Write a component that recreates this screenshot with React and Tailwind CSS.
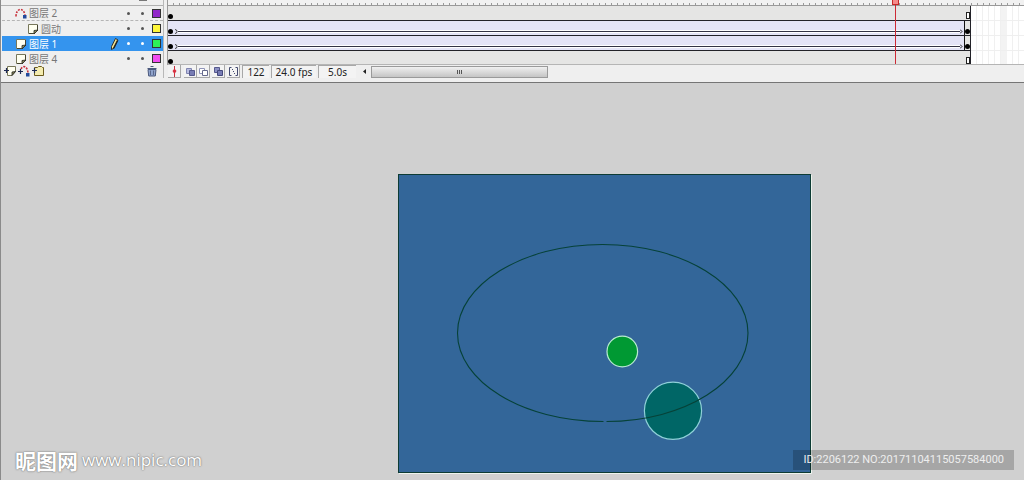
import { useState } from "react";

const LAYERS = [
  { id: "guide", name: "图层 2", color: "#9128c9", type: "guide", indent: false, tween: false },
  { id: "circle", name: "圆动", color: "#fff73a", type: "page", indent: true, tween: true },
  { id: "layer1", name: "图层 1", color: "#2df05a", type: "page", indent: false, tween: true },
  { id: "layer4", name: "图层 4", color: "#f24df0", type: "page", indent: false, tween: false },
];

function PageIcon() {
  return (
    <svg className="size-3 shrink-0" viewBox="0 0 12 12" fill="none">
      <path d="M1.5 1.5h9v5.5l-3.5 3.500h-5.500z" fill="#fffff0" stroke="#77775a" />
      <path d="M11 7L7 11V7.500z" fill="#8a8a55" stroke="#222" strokeWidth="0.8" />
      <path d="M10.500 2v5M2 10.500h5" stroke="#444430" />
    </svg>
  );
}

function GuideIcon() {
  return (
    <svg className="size-3 shrink-0" viewBox="0 0 12 12" fill="none">
      <path d="M1 9.500C1 1 8.500 0 10 8" stroke="#c8323c" strokeWidth="1.600" strokeDasharray="2 1.200" />
      <rect x="8" y="8" width="3.500" height="3.500" fill="#234a9c" />
    </svg>
  );
}

function AddLayerIcon() {
  return (
    <svg className="h-3 w-3" viewBox="0 0 12 12" fill="none">
      <path d="M3.500 1.500h8v5l-3.500 4h-4.500z" fill="#fffff0" stroke="#77775a" />
      <path d="M11.500 6.500L8 10.500V7z" fill="#8a8a55" stroke="#222" strokeWidth="0.8" />
      <path d="M0 5.500h5M2.500 3v5" stroke="#1e2a55" strokeWidth="1.200" />
    </svg>
  );
}

function AddGuideIcon() {
  return (
    <svg className="h-3 w-3" viewBox="0 0 12 12" fill="none">
      <path d="M3 4C5 0 9.500 1 10 8" stroke="#c8323c" strokeWidth="1.600" strokeDasharray="2 1.200" />
      <path d="M0 6.500h5M2.500 4v5" stroke="#1e2a55" strokeWidth="1.200" />
      <rect x="8" y="8" width="3.500" height="3.500" fill="#234a9c" />
    </svg>
  );
}

function AddFolderIcon() {
  return (
    <svg className="h-3 w-3" viewBox="0 0 12 12" fill="none">
      <path d="M2.500 10.500v-8h3l1-1h3l1 1h1v8z" fill="#f4ecb0" stroke="#6b5a1c" />
      <path d="M0 5.500h5M2.500 3v5" stroke="#1e2a55" strokeWidth="1.200" />
    </svg>
  );
}

function TrashIcon() {
  return (
    <svg className="h-3 w-3" viewBox="0 0 12 12" fill="none">
      <path d="M2 4.500h8l-.7 6.500H2.700z" fill="#8fa3cc" stroke="#4a587c" />
      <path d="M1.500 3.500h9M4.500 1.500h3" stroke="#4a587c" strokeWidth="1.200" />
      <path d="M4.500 5.500v4.500M7.500 5.500v4.500" stroke="#5a688c" />
    </svg>
  );
}

function PencilIcon() {
  return (
    <svg className="size-3 shrink-0" viewBox="0 0 12 12" fill="none">
      <path d="M7.500 .5L10 2 6 10 3.500 11.500 3.500 8.500z" fill="#f0e090" stroke="#222" strokeWidth="0.900" />
      <path d="M9.500 2.500L5.500 10.500" stroke="#222" strokeWidth="1.400" />
    </svg>
  );
}

function LayerRow({ layer, selected, onSelect }) {
  return (
    <button
      onClick={onSelect}
      className={`flex h-[15px] w-full items-center pr-0.5 text-left ${layer.indent ? "pl-[25px]" : "pl-[13px]"} ${
        selected ? "bg-[#3494ee] text-white" : "text-[#777777]"
      } ${layer.type === "guide" ? "border-b border-dashed border-[#b5b5b5]" : ""}`}
    >
      {layer.type === "guide" ? <GuideIcon /> : <PageIcon />}
      <span className="ml-0.5 flex-1 text-[10px] leading-[14px]">{layer.name}</span>
      {selected && <PencilIcon />}
      <span className={`ml-[7px] size-[3px] rounded-full ${selected ? "bg-white" : "bg-[#555555]"}`} />
      <span className={`ml-[11px] size-[3px] rounded-full ${selected ? "bg-white" : "bg-[#555555]"}`} />
      <span
        className="ml-2 size-[9px] border border-[#333333]"
        style={{ backgroundColor: layer.color }}
      />
    </button>
  );
}

function FrameRow({ tween, lined }) {
  return (
    <div className="flex h-[15px]">
      <div
        className={`flex flex-1 items-end border-r border-[#222228] ${
          tween ? "bg-[#e4e4f6]" : "bg-[#e5e5e4]"
        } ${lined ? "border-b" : "pb-px"}`}
      >
        <span className="mb-px size-[5px] rounded-full bg-black" />
        {tween ? (
          <>
            <svg className="mb-px ml-0.5 h-[5px] w-[3px]" viewBox="0 0 3 5" fill="none">
              <path d="M0 .5Q2 .5 2 2.500T0 4.500" stroke="#444" />
            </svg>
            <span className="mb-[2px] h-[3px] flex-1 border-y border-t-white border-b-white bg-[#333344]" />
            <svg className="mr-px mb-px h-[5px] w-[3px]" viewBox="0 0 3 5" fill="none">
              <path d="M0 .5L2 2.500 0 4.500" stroke="#222" />
            </svg>
            <span className="flex h-full w-1.5 items-end border-l border-[#111111] bg-[#e5e5e4]">
              <span className="mb-px size-[5px] rounded-full bg-black" />
            </span>
          </>
        ) : (
          <span className="mb-px ml-auto h-[7px] w-1 border border-[#222222] bg-white" />
        )}
      </div>
      <div className="w-[53px] border-b border-[#efefef] bg-white bg-[repeating-linear-gradient(90deg,transparent_0_5px,#f0f0f0_5px_6px)]">
        <div className="ml-[30px] h-full w-1.5 bg-[#f3f3f3]" />
      </div>
    </div>
  );
}

function ToolButton({ label, children }) {
  return (
    <button
      aria-label={label}
      className="flex h-[13px] w-[13px] items-center justify-center border-r border-b border-[#a8a8a8] bg-[#f3f3f3]"
    >
      {children}
    </button>
  );
}

function StatusField({ label, value, width }) {
  return (
    <input
      aria-label={label}
      readOnly
      value={value}
      className={`h-[13px] border-t border-l border-[#a8a8a8] bg-[#f3f3f3] text-center text-[10px] leading-3 text-[#222222] outline-none ${width}`}
    />
  );
}

function Timeline() {
  const [selected, setSelected] = useState("layer1");

  return (
    <section className="border-b border-[#757575] bg-[#efefef] pb-1">
      <div className="flex">
        {/* Layer list */}
        <div className="w-[163px] shrink-0 border-r border-[#b8b8b8]">
          <div className="flex h-1.5 items-start justify-end border-b border-[#b0b0b0] pr-4">
            <span className="h-px w-2 bg-[#777777]" />
          </div>
          <div className="h-[58px] overflow-hidden pl-px">
            {LAYERS.map((layer) => (
              <LayerRow
                key={layer.id}
                layer={layer}
                selected={selected === layer.id}
                onSelect={() => setSelected(layer.id)}
              />
            ))}
          </div>
          <div className="flex h-[14px] items-center gap-0.5 pr-[5px] pl-[3px]">
            <button aria-label="插入图层"><AddLayerIcon /></button>
            <button aria-label="添加运动引导层"><AddGuideIcon /></button>
            <button aria-label="插入图层文件夹"><AddFolderIcon /></button>
            <button aria-label="删除图层" className="ml-auto"><TrashIcon /></button>
          </div>
        </div>

        {/* Frames */}
        <div className="min-w-0 flex-1 pl-[3px]">
          <div className="relative border-l border-[#999999]">
            <div className="flex h-1.5 flex-col justify-end border-b border-[#999999] bg-[#f1f1f1]">
              <div className="h-0.5 bg-[repeating-linear-gradient(90deg,transparent_0_5px,#999999_5px_6px)]" />
            </div>
            <div className="h-[59px] overflow-hidden border-b border-[#b5b5b5]">
              {LAYERS.map((layer, i) => (
                <FrameRow key={layer.id} tween={layer.tween} lined={i < 3} />
              ))}
            </div>
            {/* Playhead */}
            <div className="absolute top-0 right-[125px] flex h-16 w-[7px] flex-col items-center">
              <span className="h-[5px] w-full border border-t-0 border-[#c62828] bg-[#f58a8a]" />
              <span className="w-px flex-1 bg-[#cc2a35]" />
            </div>
          </div>

          <div className="flex h-[13px] items-center pl-px">
            <ToolButton label="居中帧">
              <svg className="h-[11px] w-[7px]" viewBox="0 0 7 11">
                <path d="M3.500 0v11" stroke="#c83240" />
                <path d="M3.500 2.500L5.500 5 3.500 8 1.500 5z" fill="#d83040" />
              </svg>
            </ToolButton>
            <span className="w-[3px]" />
            <ToolButton label="绘图纸外观">
              <svg className="size-[9px]" viewBox="0 0 9 9">
                <path d="M.5 1.500h5v5h-5z" fill="#b8bce0" stroke="#8084b0" />
                <path d="M3.500 3.500h5v5h-5z" fill="#787cb4" stroke="#55588c" />
              </svg>
            </ToolButton>
            <ToolButton label="绘图纸外观轮廓">
              <svg className="size-[9px]" viewBox="0 0 9 9">
                <path d="M.5 1.500h5v5h-5z" fill="#fff" stroke="#9094b8" />
                <path d="M3.500 3.500h5v5h-5z" fill="#fff" stroke="#666a8c" />
              </svg>
            </ToolButton>
            <span className="w-0.5" />
            <ToolButton label="编辑多个帧">
              <svg className="size-[9px]" viewBox="0 0 9 9">
                <path d="M.5 .5h5v5h-5z" fill="#8c90c4" stroke="#55588c" />
                <path d="M3.500 3.500h5v5h-5z" fill="#787cb4" stroke="#44487c" />
              </svg>
            </ToolButton>
            <span className="w-0.5" />
            <ToolButton label="修改绘图纸标记">
              <svg className="size-[9px]" viewBox="0 0 9 9" fill="none" stroke="#444a70">
                <path d="M2.500 .5h-2v8h2M6.500 .5h2v8h-2" />
                <path d="M4 4.500h1M3 2.500h1M5 6.500h1" />
              </svg>
            </ToolButton>
            <div className="ml-0.5 flex gap-0.5">
              <StatusField label="当前帧" value="122" width="w-[27px]" />
              <StatusField label="帧频" value="24.0 fps" width="w-[45px]" />
              <StatusField label="运行时间" value="5.0s" width="w-[38px]" />
            </div>
            <div className="ml-0.5 flex flex-1 items-center">
              <button aria-label="向左滚动" className="flex h-3 w-[13px] items-center justify-center">
                <svg className="h-[5px] w-[3px]" viewBox="0 0 3 5">
                  <path d="M3 0v5L0 2.500z" fill="#222" />
                </svg>
              </button>
              <div className="flex h-3 w-[177px] items-center justify-center gap-px border border-[#9a9a9a] bg-linear-to-b from-[#f0f0f0] to-[#c5c5c5]">
                <span className="h-1 w-px bg-[#555555]" />
                <span className="h-1 w-px bg-[#555555]" />
                <span className="h-1 w-px bg-[#555555]" />
              </div>
            </div>
          </div>
        </div>
      </div>
    </section>
  );
}

function Stage() {
  return (
    <svg className="block h-[300px] w-[414px]" viewBox="0 0 414 300" fill="none">
      <path d="M413.500 1v298.500H1" stroke="#eef4ee" />
      <rect x="0.5" y="0.5" width="412" height="298" fill="#336699" stroke="#0d3b34" />
      <circle cx="224.300" cy="177.500" r="15.300" fill="#009933" stroke="#b8ecd0" strokeWidth="1.200" />
      <circle cx="275" cy="236.800" r="28.600" fill="#006666" stroke="#8fd0d8" strokeWidth="1.200" />
      <path
        d="M208.500 247.500C287 247.500 350 207 350 159S285 70.500 204.500 70.500 59.500 111 59.500 159 124 247.500 205.500 247.500"
        stroke="#064238"
        strokeWidth="1.100"
      />
    </svg>
  );
}

export default function App() {
  return (
    <div className="relative flex min-h-screen flex-col border-l border-[#8a8a8a] bg-[#d0d0d0] font-['Noto_Sans','Noto_Sans_CJK_SC',sans-serif]">
      <Timeline />
      <main className="flex-1 overflow-hidden pt-[91px] pl-[397px]">
        <Stage />
      </main>

      <div className="absolute bottom-2 left-3.5 flex items-center gap-1 text-white [text-shadow:0_0_2px_#777777,0_0_1px_#777777]">
        <span className="font-['Noto_Sans_CJK_SC',sans-serif] text-[21px] leading-6 font-bold">昵图网</span>
        <span className="font-['Open_Sans',sans-serif] text-[17px] leading-6 font-medium">www.nipic.com</span>
      </div>
      <div className="absolute right-2.5 bottom-2.5 bg-black/20 px-2.5 font-['Roboto',sans-serif] text-[11px] leading-5 text-[#eeeeee]">
        ID:2206122 NO:20171104115057584000
      </div>
    </div>
  );
}
